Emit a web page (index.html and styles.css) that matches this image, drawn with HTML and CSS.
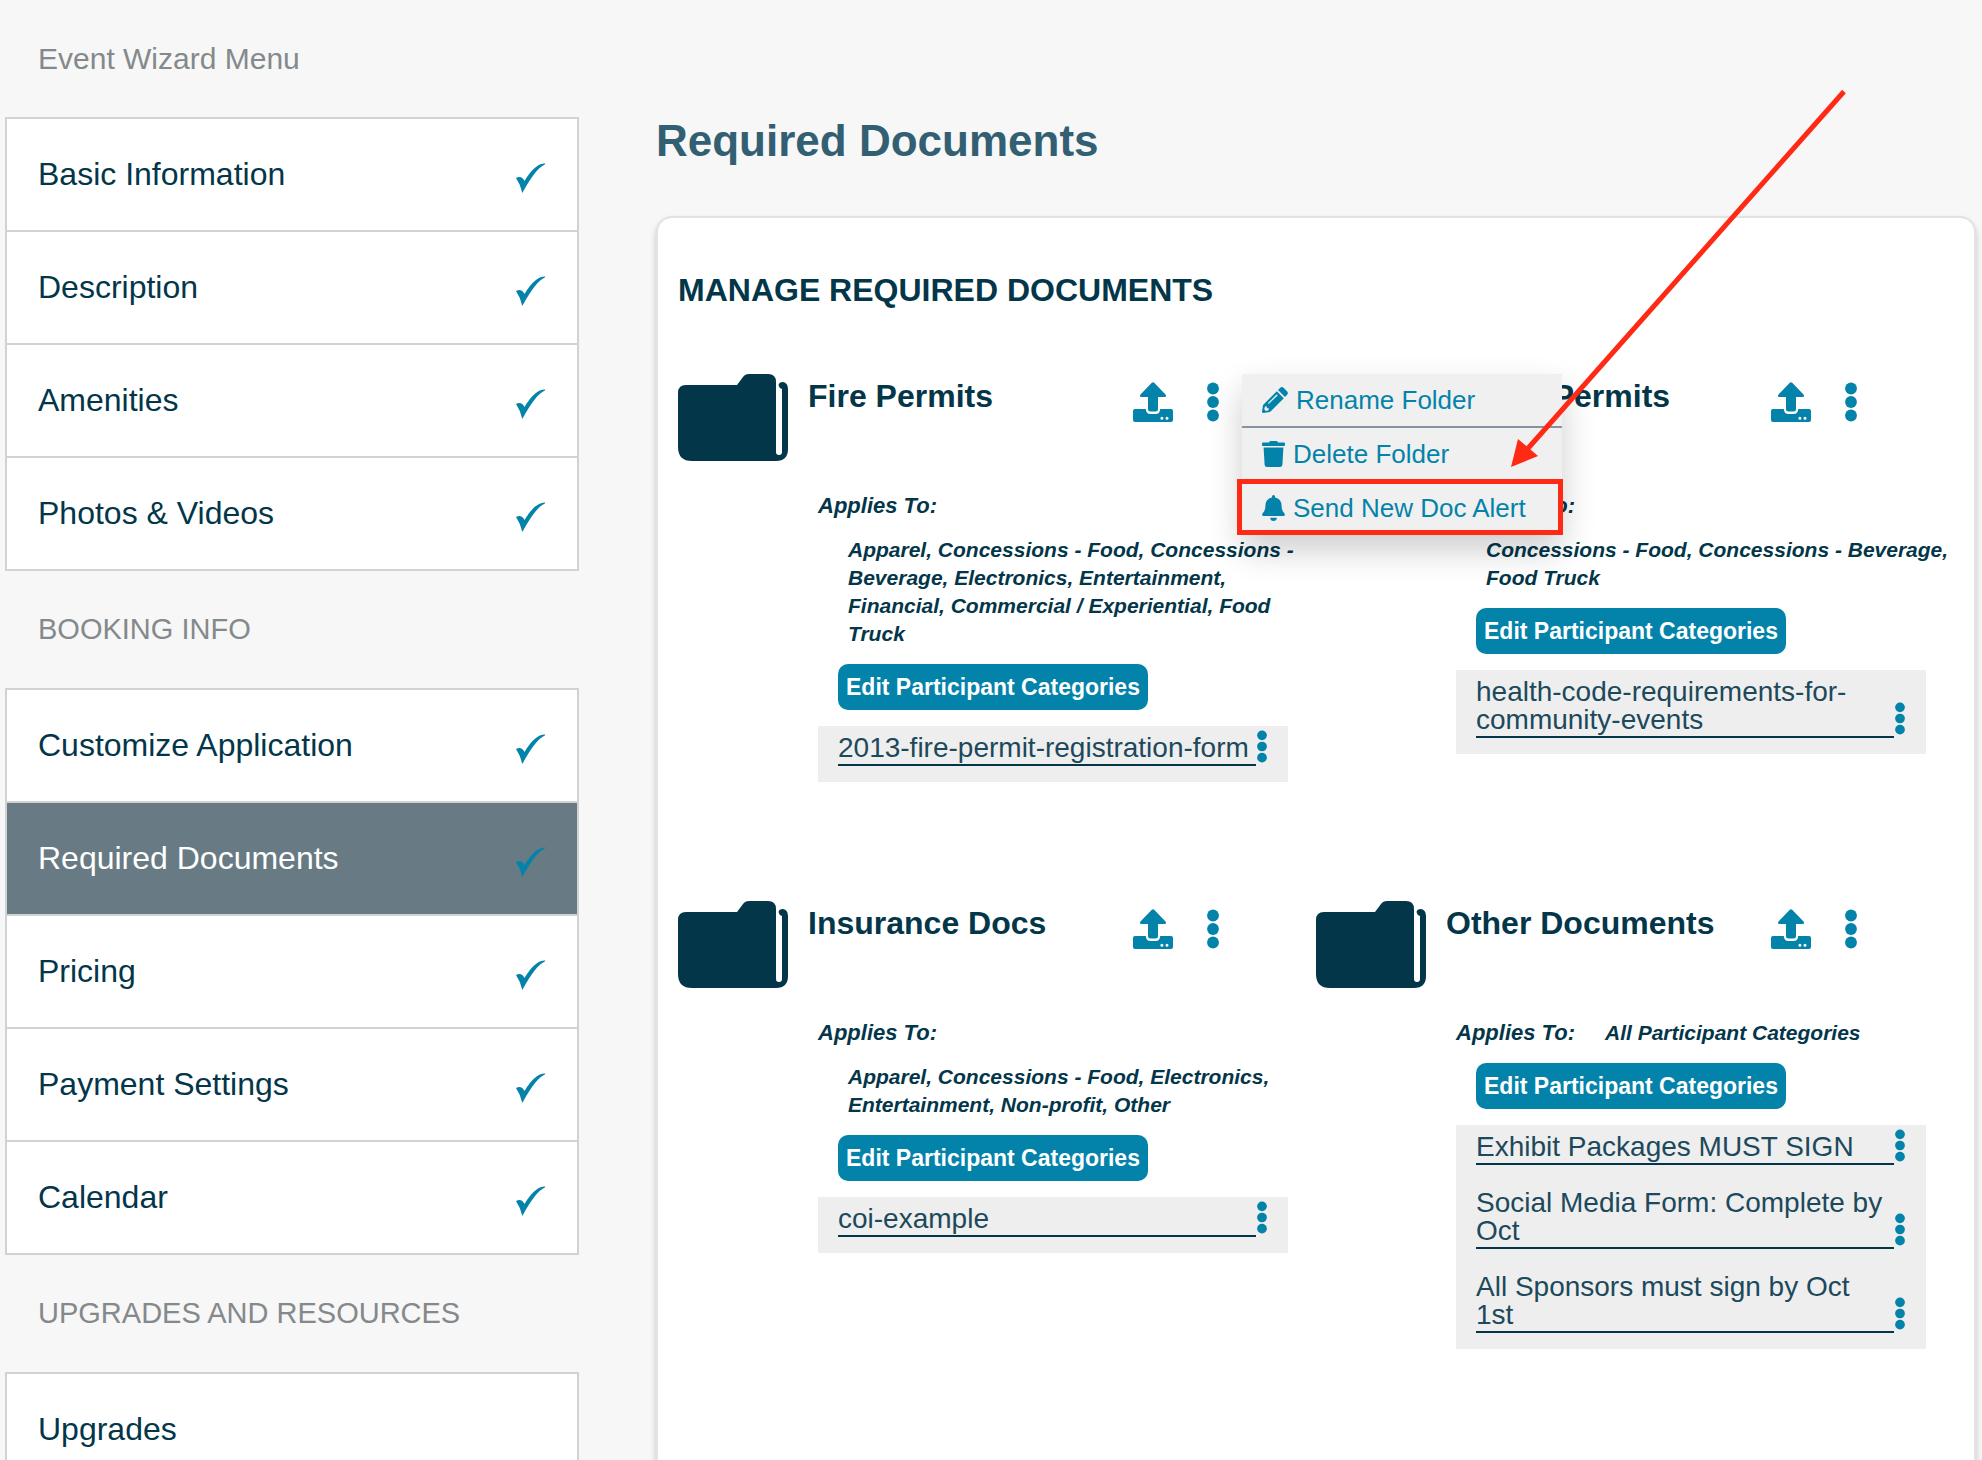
FILE: index.html
```html
<!DOCTYPE html>
<html lang="en">
<head>
    <meta charset="UTF-8">
    <meta name="viewport" content="width=device-width, initial-scale=1">
    <title>Required Documents</title>
    <link rel="stylesheet" href="styles.css">
</head>
<body>
    <!-- shared icons -->
    <svg class="sprite" aria-hidden="true">
        <symbol id="check" viewBox="0 0 30 30">
            <path d="M0 15Q5.500 12 8.500 18Q19 0 29.500 .5L28.500 1.800Q20 5 6.300 30Q4.500 21.500 0 15Z"/>
        </symbol>
        <symbol id="folder" viewBox="0 0 110 87">
            <path d="M8 11H59L65 3Q67 0 71 0H90Q98 0 98 8V78Q98 81 101 81Q104 81 104 78V15Q101 14 100.500 11Q101 8 105 8Q110 9 110 15V75Q110 87 98 87H14Q0 87 0 73V19Q0 11 8 11Z"/>
        </symbol>
        <symbol id="upload" viewBox="0 0 40 40">
            <path d="M18.800 .8Q20 -.4 21.200 .8L32.500 12.500Q34 14.800 31.500 15H25V27Q25 29.500 22.500 29.500H17.500Q15 29.500 15 27V15H8.500Q6 14.800 7.500 12.500Z"/>
            <path fill-rule="evenodd" d="M2 27H12.800Q13 32 17.500 32H22.500Q27 32 27.200 27H38Q40 27 40 29V38Q40 40 38 40H2Q0 40 0 38V29Q0 27 2 27ZM28.900 34.700a1.500 1.500 0 1 0 0 3a1.500 1.500 0 1 0 0-3ZM34 34.700a1.500 1.500 0 1 0 0 3a1.500 1.500 0 1 0 0-3Z"/>
        </symbol>
        <symbol id="dots" viewBox="0 0 12 40">
            <circle cx="6" cy="6.500" r="5.900"/><circle cx="6" cy="20" r="5.900"/><circle cx="6" cy="33.500" r="5.900"/>
        </symbol>
    </svg>

    <div class="page">
        <nav class="sidebar">
            <h2 class="menu-title">Event Wizard Menu</h2>
            <div class="menu-group">
                <a href="#">Basic Information <svg class="check"><use href="#check"/></svg></a>
                <a href="#">Description <svg class="check"><use href="#check"/></svg></a>
                <a href="#">Amenities <svg class="check"><use href="#check"/></svg></a>
                <a href="#">Photos &amp; Videos <svg class="check"><use href="#check"/></svg></a>
            </div>
            <h2 class="menu-label">BOOKING INFO</h2>
            <div class="menu-group">
                <a href="#">Customize Application <svg class="check"><use href="#check"/></svg></a>
                <a href="#" class="active">Required Documents <svg class="check"><use href="#check"/></svg></a>
                <a href="#">Pricing <svg class="check"><use href="#check"/></svg></a>
                <a href="#">Payment Settings <svg class="check"><use href="#check"/></svg></a>
                <a href="#">Calendar <svg class="check"><use href="#check"/></svg></a>
            </div>
            <h2 class="menu-label">UPGRADES AND RESOURCES</h2>
            <div class="menu-group">
                <a href="#">Upgrades</a>
            </div>
        </nav>

        <main class="content">
            <h1>Required Documents</h1>
            <section class="card">
                <h2 class="card-title">MANAGE REQUIRED DOCUMENTS</h2>
                <div class="folders">
                    <article class="folder">
                        <header class="folder-head">
                            <svg class="folder-icon"><use href="#folder"/></svg>
                            <h3>Fire Permits</h3>
                            <button class="icon-btn" aria-label="Upload"><svg class="upload"><use href="#upload"/></svg></button>
                            <button class="icon-btn" aria-label="Folder options"><svg class="kebab"><use href="#dots"/></svg></button>
                            <div class="dropdown">
                                <button>
                                    <svg class="pencil" viewBox="0 0 26 26"><path fill-rule="evenodd" d="M14.800 4.200L21.800 11.200L8 25L1.200 26Q0 26 0 24.800L1 18ZM3 19.500L2.300 22.300L3.900 23.900L6.700 23.200V21.300H4.900V19.500ZM14.500 7.600L6.300 15.800Q5.700 17 7 16.800L15.500 8.500Q15.800 7.400 14.500 7.600ZM16 3L18.300 .8Q19.900-.6 21.600 .8L25.200 4.400Q26.600 6 25.200 7.700L23 10Z"/></svg>
                                    Rename Folder
                                </button>
                                <button>
                                    <svg class="trash" viewBox="0 0 23 26"><path d="M1 1.600H7L7.500 .6Q7.900 0 8.600 0H14.400Q15.100 0 15.500 .6L16 1.600H22Q23 1.600 23 2.500V4Q23 4.900 22 4.900H1Q0 4.900 0 4V2.500Q0 1.600 1 1.600ZM1.600 6.500H21.400L20.400 23.700Q20.200 26 18 26H5Q2.800 26 2.600 23.700Z"/></svg>
                                    Delete Folder
                                </button>
                                <button>
                                    <svg class="bell" viewBox="0 0 23 26"><path d="M11.500 0Q13.100 0 13.100 1.700V2.600Q19.500 4 19.600 11Q19.600 16 22.500 18.500Q23.500 20.500 21.400 21.100H1.600Q-.5 20.500 .5 18.500Q3.400 16 3.400 11Q3.500 4 9.900 2.600V1.700Q9.900 0 11.500 0ZM8.200 22.800H14.800Q14.600 26 11.500 26Q8.400 26 8.200 22.800Z"/></svg>
                                    Send New Doc Alert
                                    <span class="highlight"></span>
                                </button>
                                <svg class="arrow" viewBox="0 0 336 378"><path d="M333 2.500L12 365" fill="none" stroke="#ff2a15" stroke-width="5"/><path d="M0 378L7 350L27 367Z"/></svg>
                            </div>
                        </header>
                        <div class="folder-body">
                            <div class="applies">
                                <span class="applies-label">Applies To:</span>
                                <span class="categories">Apparel, Concessions - Food, Concessions - Beverage, Electronics, Entertainment, Financial, Commercial / Experiential, Food Truck</span>
                            </div>
                            <button class="edit-btn">Edit Participant Categories</button>
                            <ul class="docs">
                                <li><a href="#">2013-fire-permit-registration-form</a><button class="icon-btn" aria-label="Document options"><svg class="kebab-sm"><use href="#dots"/></svg></button></li>
                            </ul>
                        </div>
                    </article>

                    <article class="folder">
                        <header class="folder-head">
                            <svg class="folder-icon"><use href="#folder"/></svg>
                            <h3>Health Permits</h3>
                            <button class="icon-btn" aria-label="Upload"><svg class="upload"><use href="#upload"/></svg></button>
                            <button class="icon-btn" aria-label="Folder options"><svg class="kebab"><use href="#dots"/></svg></button>
                        </header>
                        <div class="folder-body">
                            <div class="applies">
                                <span class="applies-label">Applies To:</span>
                                <span class="categories">Concessions - Food, Concessions - Beverage, Food Truck</span>
                            </div>
                            <button class="edit-btn">Edit Participant Categories</button>
                            <ul class="docs">
                                <li><a href="#">health-code-requirements-for-community-events</a><button class="icon-btn" aria-label="Document options"><svg class="kebab-sm"><use href="#dots"/></svg></button></li>
                            </ul>
                        </div>
                    </article>

                    <article class="folder">
                        <header class="folder-head">
                            <svg class="folder-icon"><use href="#folder"/></svg>
                            <h3>Insurance Docs</h3>
                            <button class="icon-btn" aria-label="Upload"><svg class="upload"><use href="#upload"/></svg></button>
                            <button class="icon-btn" aria-label="Folder options"><svg class="kebab"><use href="#dots"/></svg></button>
                        </header>
                        <div class="folder-body">
                            <div class="applies">
                                <span class="applies-label">Applies To:</span>
                                <span class="categories">Apparel, Concessions - Food, Electronics, Entertainment, Non-profit, Other</span>
                            </div>
                            <button class="edit-btn">Edit Participant Categories</button>
                            <ul class="docs">
                                <li><a href="#">coi-example</a><button class="icon-btn" aria-label="Document options"><svg class="kebab-sm"><use href="#dots"/></svg></button></li>
                            </ul>
                        </div>
                    </article>

                    <article class="folder">
                        <header class="folder-head">
                            <svg class="folder-icon"><use href="#folder"/></svg>
                            <h3>Other Documents</h3>
                            <button class="icon-btn" aria-label="Upload"><svg class="upload"><use href="#upload"/></svg></button>
                            <button class="icon-btn" aria-label="Folder options"><svg class="kebab"><use href="#dots"/></svg></button>
                        </header>
                        <div class="folder-body">
                            <div class="applies">
                                <span class="applies-label">Applies To:</span>
                                <span class="categories">All Participant Categories</span>
                            </div>
                            <button class="edit-btn">Edit Participant Categories</button>
                            <ul class="docs">
                                <li><a href="#">Exhibit Packages MUST SIGN</a><button class="icon-btn" aria-label="Document options"><svg class="kebab-sm"><use href="#dots"/></svg></button></li>
                                <li><a href="#">Social Media Form: Complete by Oct</a><button class="icon-btn" aria-label="Document options"><svg class="kebab-sm"><use href="#dots"/></svg></button></li>
                                <li><a href="#">All Sponsors must sign by Oct 1st</a><button class="icon-btn" aria-label="Document options"><svg class="kebab-sm"><use href="#dots"/></svg></button></li>
                            </ul>
                        </div>
                    </article>
                </div>
            </section>
        </main>
    </div>
</body>
</html>
```
FILE: styles.css
```css
* { box-sizing: border-box; }
body { margin: 0; background: #f7f7f7; color: #04364a; font-family: "Liberation Sans", Arial, sans-serif; }
h1, h2, h3, ul { margin: 0; padding: 0; }
a { color: inherit; text-decoration: none; }
button { font-family: inherit; border: none; padding: 0; cursor: pointer; }
svg { display: block; flex: none; fill: #0483aa; }
.sprite { position: absolute; width: 0; height: 0; }

.page { display: grid; grid-template-columns: minmax(0, 574px) minmax(0, 1fr); column-gap: 77px; height: 100vh; padding: 0 6px 0 5px; overflow: hidden; }

/* sidebar */
.menu-title, .menu-label { padding-left: 33px; color: #84898c; font-weight: normal; line-height: 117px; }
.menu-title { font-size: 30px; }
.menu-label { font-size: 29px; }
.menu-group { border: 2px solid #d2d2d2; border-top: none; background: #fff; }
.menu-group a { display: flex; align-items: center; justify-content: space-between; height: 113px; padding: 0 31px; border-top: 2px solid #d2d2d2; font-size: 32px; }
.menu-group a.active { background: #687a83; color: #fff; }
.check { width: 30px; height: 30px; margin-top: 6px; }

/* main card */
.content { display: flex; flex-direction: column; }
h1 { padding: 116px 0 50px; color: #335f73; font-size: 44px; line-height: 50px; }
.card { flex: 1 0 auto; padding: 54px 20px; border: 2px solid #e2e2e2; border-bottom: none; border-radius: 16px 16px 0 0; background: #fff; box-shadow: 0 4px 6px rgba(0, 0, 0, .2); }
.card-title { font-size: 32px; line-height: 36px; }
.folders { display: grid; grid-template-columns: repeat(2, minmax(0, 1fr)); row-gap: 119px; margin-top: 66px; }

/* folder */
.folder-head { position: relative; display: flex; align-items: flex-start; height: 87px; margin-right: 97px; }
.folder-icon { width: 110px; height: 87px; fill: #04364a; }
.folder-head h3 { flex: 1; padding: 4px 0 0 20px; font-size: 32px; line-height: 36px; }
.icon-btn { background: none; }
.folder-head .icon-btn { margin-top: 8px; }
.upload { width: 40px; height: 40px; }
.kebab { width: 12px; height: 40px; margin-left: 34px; }
.folder-body { margin: 31px 0 0 140px; }
.applies { display: flex; flex-wrap: wrap; row-gap: 16px; font-style: italic; font-weight: bold; line-height: 28px; }
.applies-label { font-size: 22px; }
.categories { margin-left: 30px; font-size: 21px; }
.edit-btn { display: block; height: 46px; margin: 16px 0 16px 20px; padding: 0 8px; border-radius: 10px; background: #0483aa; color: #fff; font-size: 23px; font-weight: bold; }

/* documents */
.docs { margin-right: 28px; padding: 0 20px; background: #eee; list-style: none; }
.docs li { display: flex; align-items: flex-end; padding-bottom: 16px; }
.docs a { flex: 1; padding: 8px 0 2px; border-bottom: 2px solid #04364a; color: #1c495b; font-size: 28px; line-height: 28px; }
.docs .icon-btn { width: 12px; margin-bottom: 3px; }
.kebab-sm { width: 12px; height: 33px; }

/* folder menu */
.dropdown { position: absolute; top: 0; left: 100%; z-index: 2; width: 320px; margin-left: 23px; background: #f0f0f0; box-shadow: 0 16px 32px rgba(0, 0, 0, .2); }
.dropdown button { position: relative; display: flex; align-items: center; gap: 8px; width: 100%; height: 54px; padding-left: 20px; border-bottom: 2px solid #8593a0; background: #f0f0f0; color: #0483aa; font-size: 26px; }
.dropdown button:last-of-type { height: 52px; border-bottom: none; }
.pencil { width: 26px; height: 26px; }
.trash, .bell { width: 23px; height: 26px; }
.highlight { position: absolute; inset: -3px -1px -1px -5px; border: 5px solid #ff2a15; }
.arrow { position: absolute; top: -285px; left: 269px; width: 336px; height: 378px; fill: #ff2a15; pointer-events: none; }
```
